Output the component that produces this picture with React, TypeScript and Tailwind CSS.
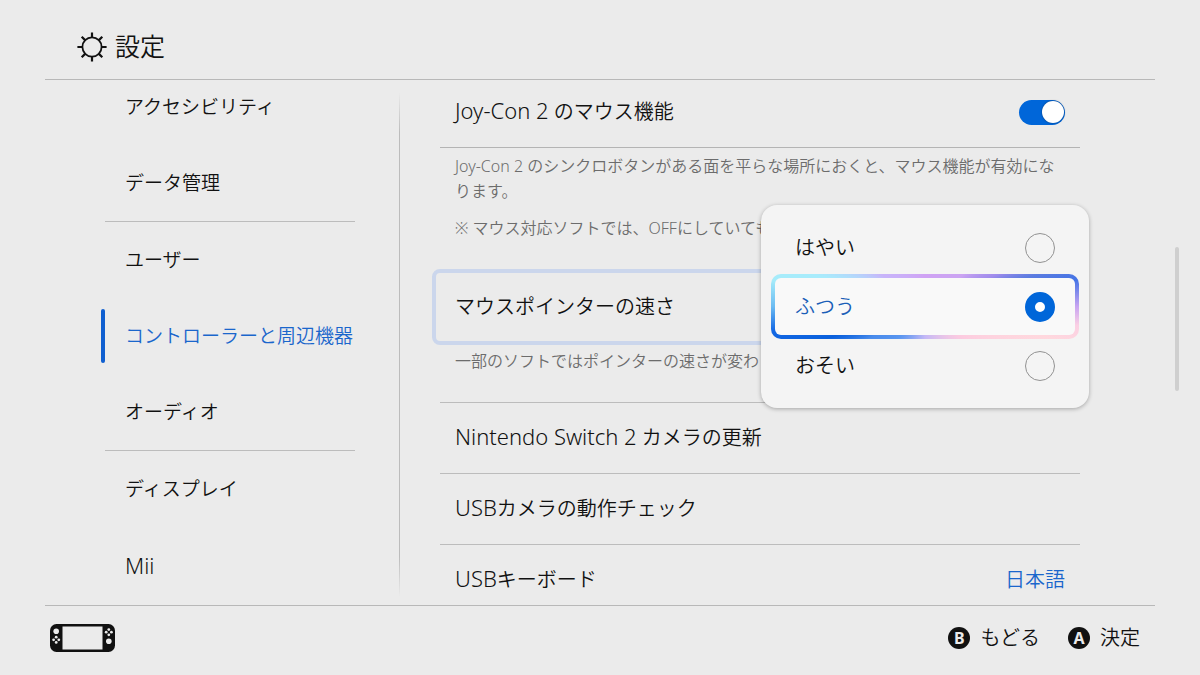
import { useState, type ReactNode } from "react";

type NavItem = { label: string; divider?: boolean };

const NAV: NavItem[] = [
  { label: "アクセシビリティ" },
  { label: "データ管理", divider: true },
  { label: "ユーザー" },
  { label: "コントローラーと周辺機器" },
  { label: "オーディオ", divider: true },
  { label: "ディスプレイ" },
  { label: "Mii" },
];

const SPEEDS = ["はやい", "ふつう", "おそい"];

function GearIcon() {
  return (
    <svg viewBox="0 0 30 30" className="size-[30px]" fill="none" stroke="currentColor" aria-hidden="true">
      <circle cx="15" cy="15" r="9.6" strokeWidth="1.8" />
      <path
        strokeWidth="2.2"
        d="M15 6V.4M15 24v5.6M6 15H.4M24 15h5.6M8.6 8.6 4.7 4.7M21.4 8.6l3.9-3.9M8.6 21.4l-3.9 3.9M21.4 21.4l3.9 3.9"
      />
    </svg>
  );
}

function ConsoleIcon() {
  return (
    <svg viewBox="0 0 65 28" className="h-7 w-[65px]" aria-hidden="true">
      <rect width="65" height="28" rx="6.5" fill="#111" />
      <rect x="12.5" y="2.5" width="40" height="23" fill="#ebebeb" />
      <g fill="#ebebeb">
        <circle cx="6.2" cy="7.2" r="2.8" />
        <circle cx="58.8" cy="17.2" r="2.8" />
        <circle cx="6.2" cy="13.2" r="1.4" />
        <circle cx="6.2" cy="18.4" r="1.4" />
        <circle cx="3.6" cy="15.8" r="1.4" />
        <circle cx="8.8" cy="15.8" r="1.4" />
        <circle cx="58.8" cy="5.6" r="1.4" />
        <circle cx="58.8" cy="10.8" r="1.4" />
        <circle cx="56.2" cy="8.2" r="1.4" />
        <circle cx="61.4" cy="8.2" r="1.4" />
      </g>
    </svg>
  );
}

/* Latin names are set a step larger than the kana beside them. */
function Latin({ children }: { children: ReactNode }) {
  return <span className="text-[22px] leading-none">{children}</span>;
}

function Sidebar() {
  const [active, setActive] = useState("コントローラーと周辺機器");
  return (
    <nav className="ml-[101px] w-[254px] shrink-0 overflow-hidden" aria-label="設定">
      <ul className="-mt-[11px]">
        {NAV.map(({ label, divider }) => (
          <li key={label}>
            <button
              type="button"
              onClick={() => setActive(label)}
              className={`flex h-19 w-full items-center gap-5 text-left text-[19px] whitespace-nowrap ${
                active === label ? "text-[#1a66cc]" : ""
              }`}
            >
              <span className={`h-[54px] w-1 shrink-0 rounded-full ${active === label ? "bg-[#0f5fd0]" : ""}`} />
              {label === "Mii" ? <Latin>{label}</Latin> : label}
            </button>
            {divider && <hr className="ml-1 border-[#bcbcbc]" />}
          </li>
        ))}
      </ul>
    </nav>
  );
}

function LinkRow({ children, value, last }: { children: ReactNode; value?: string; last?: boolean }) {
  return (
    <button
      type="button"
      className={`flex h-[71px] w-full items-center justify-between border-b px-[15px] ${
        last ? "border-transparent" : "border-[#bcbcbc]"
      }`}
    >
      <span>{children}</span>
      {value && <span className="text-[#1a66cc]">{value}</span>}
    </button>
  );
}

function SpeedMenu() {
  const [speed, setSpeed] = useState("ふつう");
  return (
    <div
      role="radiogroup"
      aria-labelledby="pointer-speed-label"
      className="absolute -top-16 -right-[9px] z-10 w-[328px] rounded-2xl bg-[#f4f4f4] px-2.5 py-[13px] shadow-[0_1px_4px_rgba(0,0,0,0.3)]"
    >
      {SPEEDS.map((name) => (
        <label key={name} className="relative flex h-[59px] items-center justify-between px-6">
          {speed === name && (
            <span className="absolute inset-x-0 -inset-y-[3px] rounded-[10px] border-4 border-transparent [background:linear-gradient(#f9f9f9,#f9f9f9)_padding-box,conic-gradient(#d0a2f4_0deg,#cba4f2_50deg,#a08cec_66deg,#5c7ce0_74deg,#4474e6_80deg,#c8a4f2_90deg,#fbd0e4_97deg,#ffd8de_104deg,#fccbe0_130deg,#c4b8f6_180deg,#5a96f0_220deg,#4a8cec_240deg,#0a60dc_252deg,#1468e4_261deg,#6cbcf2_270deg,#a6ecfa_280deg,#a8ecfc_286deg,#c8b4fa_306deg,#d0a2f4_360deg)_border-box]" />
          )}
          <span className={`relative ${speed === name ? "text-[#1a5fb8]" : ""}`}>{name}</span>
          <input
            type="radio"
            name="pointer-speed"
            checked={speed === name}
            onChange={() => setSpeed(name)}
            className="relative size-[30px] appearance-none rounded-full border border-[#929292] checked:border-10 checked:border-[#0066d9] checked:bg-white"
          />
        </label>
      ))}
    </div>
  );
}

function Note({ children }: { children: ReactNode }) {
  return <p className="px-[15px] text-base leading-[25px] text-[#6c6c6c]">{children}</p>;
}

function Settings() {
  return (
    <section className="ml-10 min-w-0 flex-1">
      <label className="-mt-[3px] flex h-[71px] items-center justify-between border-b border-[#b4b4b4] px-[15px]">
        <span>
          <Latin>Joy-Con 2</Latin> のマウス機能
        </span>
        <input
          type="checkbox"
          role="switch"
          defaultChecked
          className="flex h-[25px] w-[46px] appearance-none items-center rounded-full bg-[#a0a0a0] px-px before:size-[22px] before:rounded-full before:bg-white before:shadow-[0_0_2px_rgba(0,0,0,0.5)] checked:justify-end checked:bg-[#0066d9]"
        />
      </label>
      <div className="flex flex-col gap-3 pt-1.5">
        <Note>Joy-Con 2 のシンクロボタンがある面を平らな場所におくと、マウス機能が有効になります。</Note>
        <Note>※ マウス対応ソフトでは、OFFにしていても</Note>
      </div>
      <div className="relative mt-7">
        <div className="-mx-2">
          <button
            type="button"
            aria-haspopup="true"
            id="pointer-speed-label"
            className="flex h-[76px] w-full items-center rounded-lg border-4 border-[#cbd6ec] px-[19px]"
          >
            マウスポインターの速さ
          </button>
        </div>
        <SpeedMenu />
      </div>
      <div className="border-b border-[#bcbcbc] pt-1 pb-7">
        <Note>一部のソフトではポインターの速さが変わら</Note>
      </div>
      <LinkRow>
        <Latin>Nintendo Switch 2</Latin> カメラの更新
      </LinkRow>
      <LinkRow>
        <Latin>USB</Latin>カメラの動作チェック
      </LinkRow>
      <LinkRow value="日本語" last>
        <Latin>USB</Latin>キーボード
      </LinkRow>
    </section>
  );
}

function Action({ letter, label }: { letter: string; label: string }) {
  return (
    <button type="button" className="flex items-center gap-2.5">
      <span className="flex size-[22px] items-center justify-center rounded-full bg-[#111] text-base leading-none font-bold text-[#ebebeb]">
        {letter}
      </span>
      {label}
    </button>
  );
}

export default function App() {
  return (
    <div
      lang="ja"
      className="flex h-screen flex-col overflow-hidden bg-[#ebebeb] font-['Noto_Sans','Noto_Sans_CJK_JP',sans-serif] text-xl font-[360] text-[#111]"
    >
      <header className="mx-[45px] flex h-20 shrink-0 items-center gap-2 border-b border-[#b8b8b8] px-8 pt-3.5">
        <GearIcon />
        <h1 className="text-[25px] leading-none">設定</h1>
      </header>
      <main className="flex min-h-0 flex-1 overflow-hidden">
        <Sidebar />
        <div className="mt-3 mb-2 ml-11 w-px shrink-0 bg-[linear-gradient(transparent,#bcbcbc_8%,#bcbcbc_92%,transparent)]" />
        <Settings />
        <div className="ml-[95px] flex w-[25px] shrink-0 items-center">
          <div className="mb-12 h-36 w-1 rounded-full bg-[#cfcfcf]" />
        </div>
      </main>
      <footer className="mx-[45px] flex h-[70px] shrink-0 items-center justify-between border-t border-[#b8b8b8] pr-[15px] pb-1.5 pl-[5px]">
        <ConsoleIcon />
        <div className="flex items-center gap-7">
          <Action letter="B" label="もどる" />
          <Action letter="A" label="決定" />
        </div>
      </footer>
    </div>
  );
}
